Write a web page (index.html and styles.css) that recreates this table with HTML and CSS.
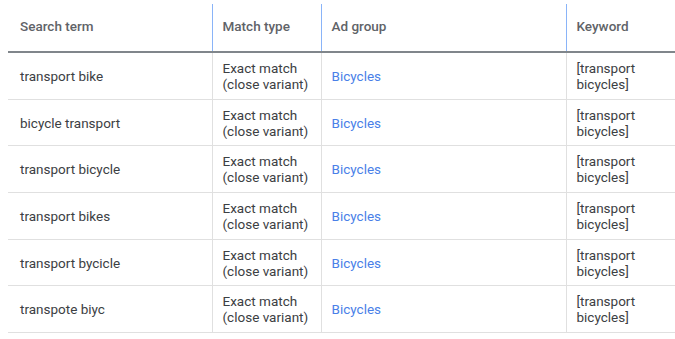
FILE: index.html
```html
<!DOCTYPE html>
<html>
<head>
<meta charset="utf-8">
<link rel="stylesheet" href="styles.css">
</head>
<body>
<div class="wrap">
<table class="grid">
<colgroup>
<col class="c1"><col class="c2"><col class="c3"><col class="c4">
</colgroup>
<thead>
<tr><th class="first">Search term</th><th>Match type</th><th>Ad group</th><th>Keyword</th></tr>
</thead>
<tbody>
<tr><td class="first">transport bike</td><td>Exact match<br>(close variant)</td><td><a class="link">Bicycles</a></td><td>[transport<br>bicycles]</td></tr>
<tr><td class="first">bicycle transport</td><td>Exact match<br>(close variant)</td><td><a class="link">Bicycles</a></td><td>[transport<br>bicycles]</td></tr>
<tr><td class="first">transport bicycle</td><td>Exact match<br>(close variant)</td><td><a class="link">Bicycles</a></td><td>[transport<br>bicycles]</td></tr>
<tr><td class="first">transport bikes</td><td>Exact match<br>(close variant)</td><td><a class="link">Bicycles</a></td><td>[transport<br>bicycles]</td></tr>
<tr><td class="first">transport bycicle</td><td>Exact match<br>(close variant)</td><td><a class="link">Bicycles</a></td><td>[transport<br>bicycles]</td></tr>
<tr><td class="first">transpote biyc</td><td>Exact match<br>(close variant)</td><td><a class="link">Bicycles</a></td><td>[transport<br>bicycles]</td></tr>
</tbody>
</table>
</div>
</body>
</html>
```
FILE: styles.css
```css
html, body {
  margin: 0;
  padding: 0;
  background: #ffffff;
}
.wrap {
  padding: 4px 0 0 8px;
  font-family: Roboto, "Liberation Sans", sans-serif;
}
.grid {
  border-collapse: collapse;
  width: 667px;
  table-layout: fixed;
}
.c1 { width: 204px; }
.c2 { width: 109px; }
.c3 { width: 245px; }
.c4 { width: 109px; }
.grid th {
  height: 48px;
  padding: 0 10px 4px 10px;
  text-align: left;
  font-weight: 500;
  font-size: 13.5px;
  color: #5f6368;
  border-left: 1px solid #8ab4f8;
  border-bottom: 2px solid #80868b;
  box-sizing: border-box;
  vertical-align: middle;
}
.grid th.first {
  border-left: none;
  padding-left: 12px;
}
.grid th:last-child {
  border-right: 1px solid #e8eaed;
}
.grid td {
  height: 45.7px;
  padding: 0 10px;
  font-size: 13.5px;
  line-height: 16px;
  color: #3c4043;
  border-left: 1px solid #e0e0e0;
  border-bottom: 1px solid #e0e0e0;
  vertical-align: middle;
}
.grid td.first {
  border-left: none;
  padding-left: 12px;
}
.grid td:last-child {
  border-right: 1px solid #e0e0e0;
}
.link {
  color: #4a7fe8;
  text-decoration: none;
}
```
